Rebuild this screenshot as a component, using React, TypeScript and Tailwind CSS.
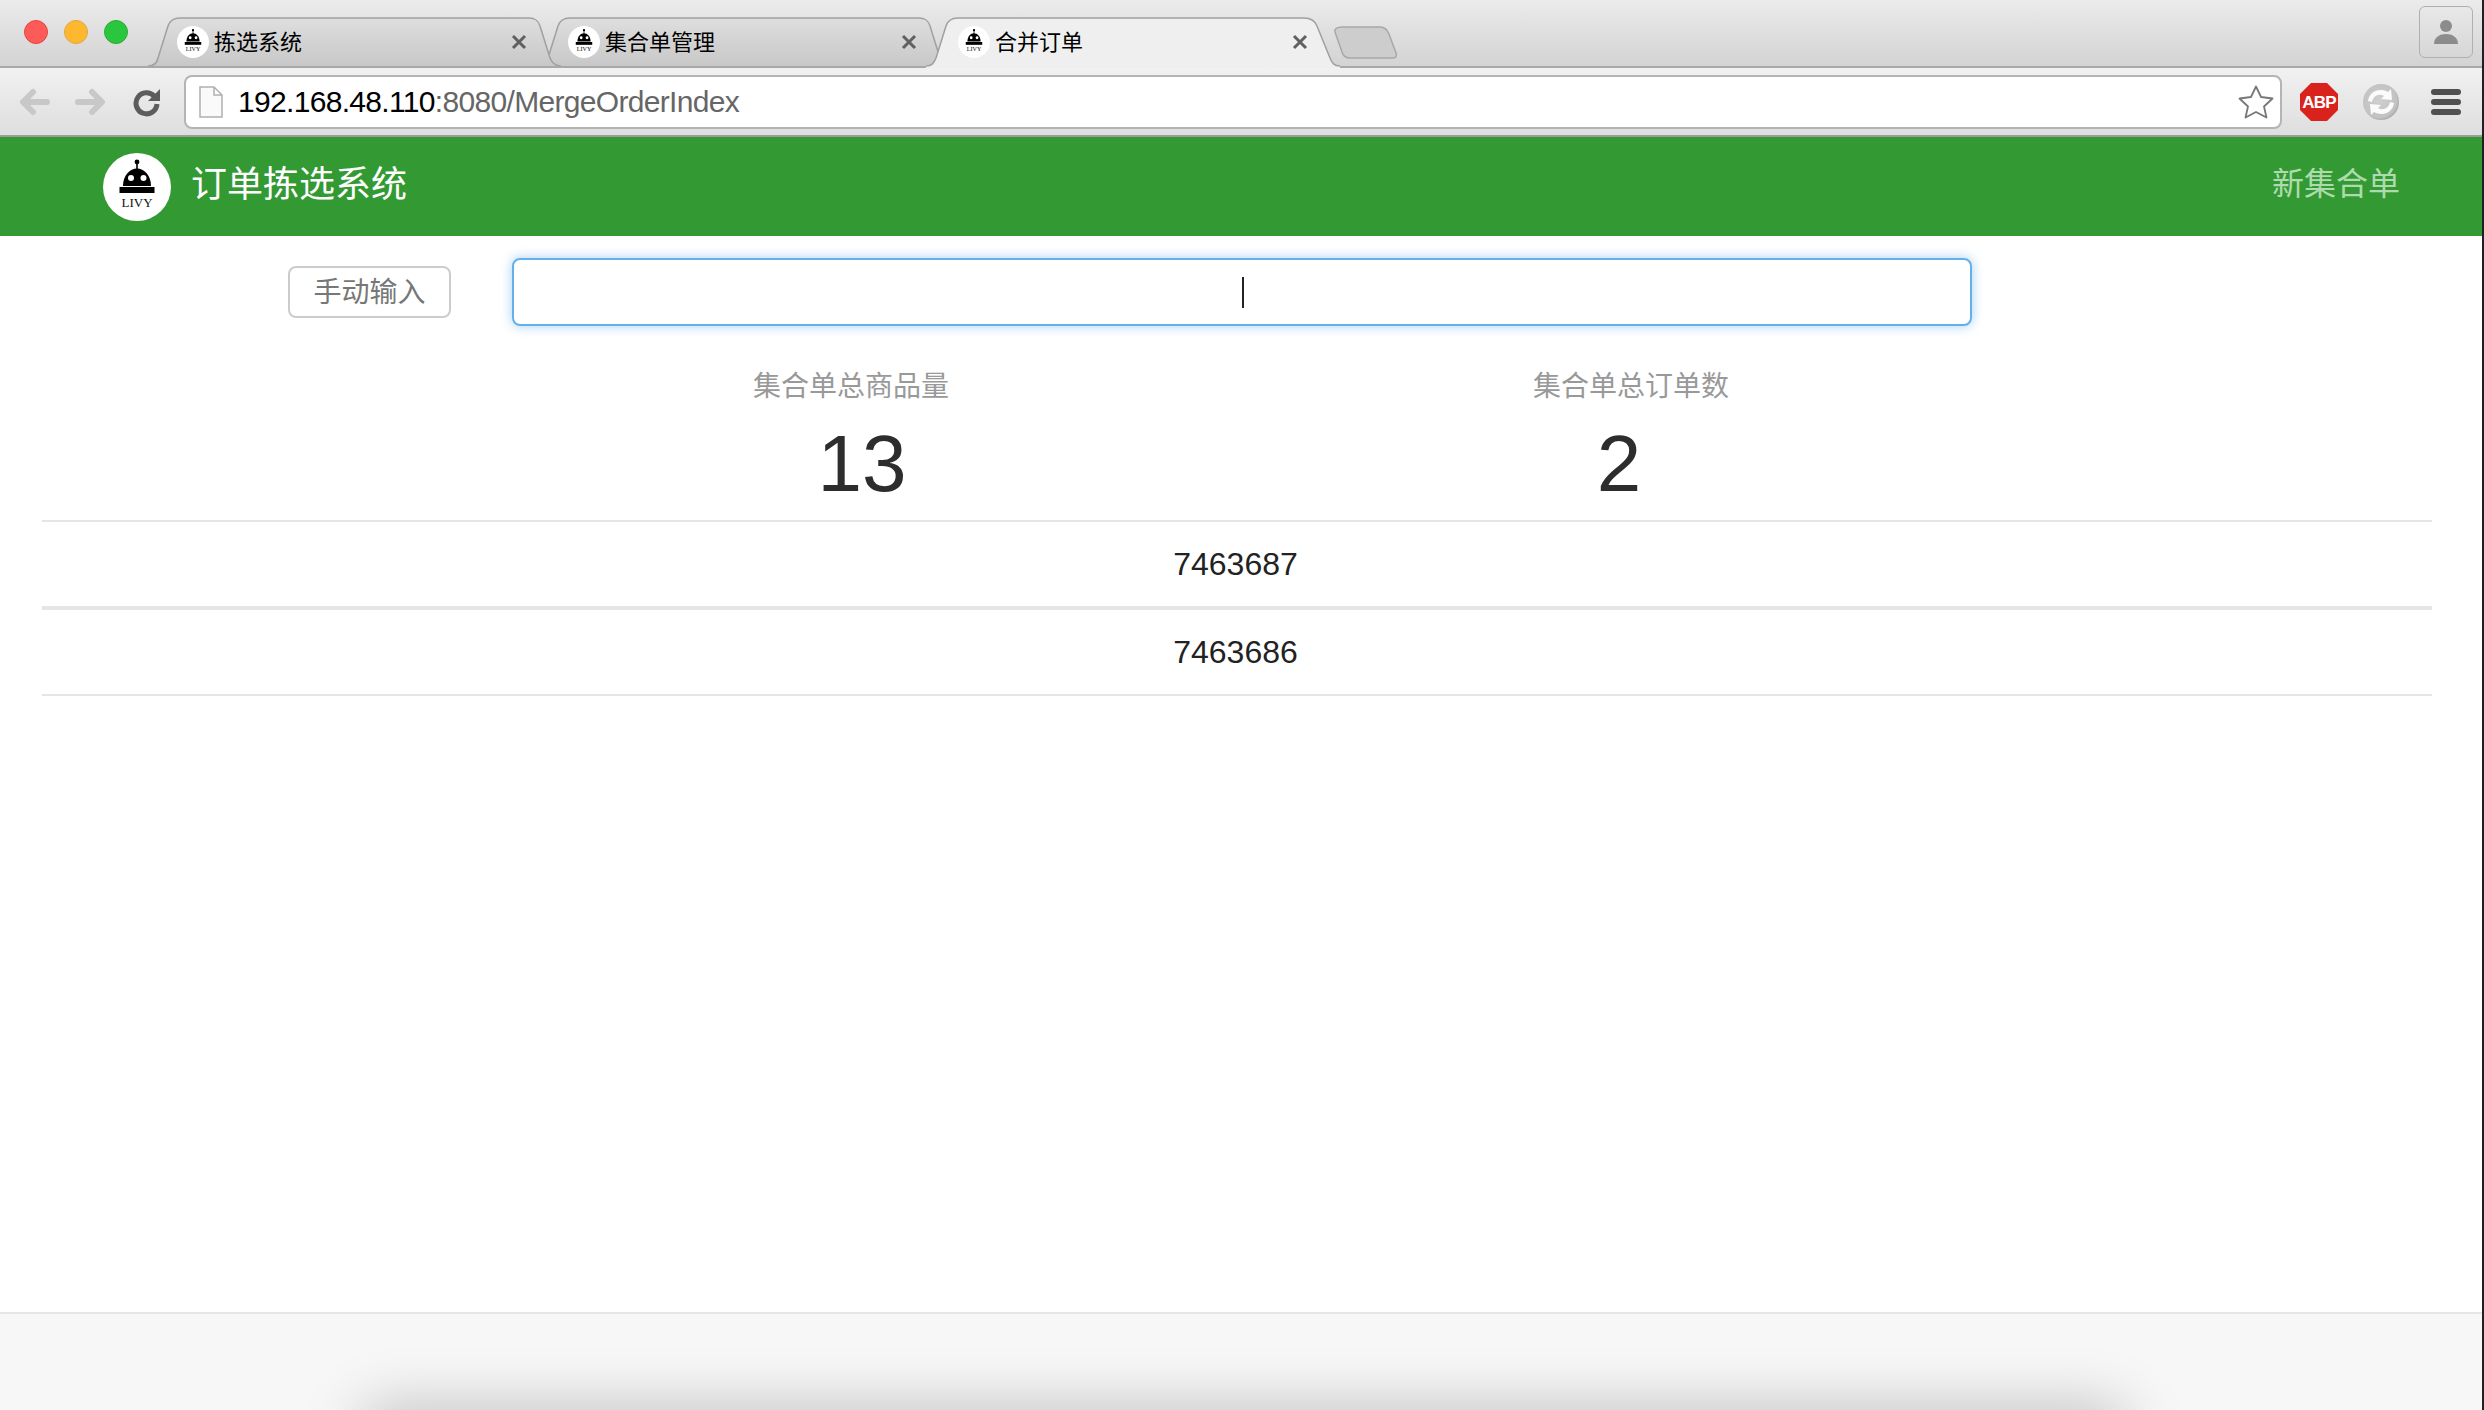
const sans = "font-['Liberation_Sans','Noto_Sans_CJK_SC',sans-serif]"

function LivyLogo({ size }: { size: number }) {
  return (
    <svg width={size} height={size} viewBox="0 0 68 68" className="shrink-0">
      <circle cx="34" cy="34" r="34" fill="#fff" />
      <circle cx="34" cy="9" r="2.4" fill="#000" />
      <rect x="33.2" y="9" width="1.6" height="8" fill="#000" />
      <path d="M20 33 C20 22 27 15.5 34 15.5 C41 15.5 48 22 48 33 Z" fill="#000" />
      <circle cx="28" cy="25" r="3" fill="#fff" />
      <circle cx="40.5" cy="25" r="3" fill="#fff" />
      <rect x="16.5" y="34" width="35" height="6" fill="#000" />
      <text x="34" y="54" textAnchor="middle" fontSize="13" fill="#111" fontFamily="Liberation Serif, serif">LIVY</text>
    </svg>
  )
}

function TabShape({ active }: { active?: boolean }) {
  if (active) {
    const edge = "M0 49 C6 49 8 46 10 41 L20 9 C22 3 26 1 32 1 L378 1 C385 1 389 4 391 9 L404 41 C406 46 408 49 414 49"
    return (
      <svg width={414} height={51} className="absolute left-0 top-0">
        <path d={`${edge} L414 51 L0 51 Z`} fill="#efefef" />
        <path d={edge} fill="none" stroke="#a0a0a0" strokeWidth="1.5" />
      </svg>
    )
  }
  return (
    <svg width={413} height={49} className="absolute left-0 top-0">
      <defs>
        <linearGradient id="tabIdle" x1="0" y1="0" x2="0" y2="1">
          <stop offset="0" stopColor="#dedede" />
          <stop offset="1" stopColor="#c8c8c8" />
        </linearGradient>
      </defs>
      <path d="M0 49 C6 49 9 46 10 41 L20 9 C22 3 26 1 32 1 L381 1 C387 1 390 3 392 9 L402 41 C404 46 407 49 413 49" fill="url(#tabIdle)" stroke="#a0a0a0" strokeWidth="1.5" />
    </svg>
  )
}

function CloseX() {
  return (
    <svg width="16" height="16" viewBox="0 0 16 16" className="shrink-0">
      <path d="M2 2 L14 14 M14 2 L2 14" stroke="#606060" strokeWidth="3" />
    </svg>
  )
}

function Tab({ title, active, z, className, iconPad, closePad }: { title: string; active?: boolean; z: string; className?: string; iconPad: string; closePad: string }) {
  return (
    <div className={`relative flex shrink-0 ${active ? "h-[51px] w-[414px]" : "h-[49px] w-[413px]"} ${z} ${className ?? ""}`}>
      <TabShape active={active} />
      <div className={`relative mt-[9px] flex h-[32px] w-full items-center ${iconPad} ${closePad}`}>
        <LivyLogo size={32} />
        <span className="ml-[5px] pt-[1px] text-[22px] leading-[32px] text-black">{title}</span>
        <span className="ml-auto"><CloseX /></span>
      </div>
    </div>
  )
}

function Toolbar() {
  return (
    <div className="flex h-[71px] items-center border-t-2 border-b-2 border-t-[#a8a8a8] border-b-[#9c9c9c] bg-gradient-to-b from-[#f1f1f1] to-[#dedede]">
      <svg width="32" height="28" viewBox="0 0 32 28" className="ml-[19px] shrink-0">
        <path d="M14 4 L4 14 L14 24 M5 14 L28 14" fill="none" stroke="#c8c8c8" strokeWidth="6" strokeLinecap="round" strokeLinejoin="round" />
      </svg>
      <svg width="32" height="28" viewBox="0 0 32 28" className="ml-[23px] shrink-0">
        <path d="M18 4 L28 14 L18 24 M27 14 L4 14" fill="none" stroke="#c8c8c8" strokeWidth="6" strokeLinecap="round" strokeLinejoin="round" />
      </svg>
      <svg width="30" height="30" viewBox="0 0 30 30" className="ml-[26px] shrink-0">
        <path d="M22.5 9.5 A10.5 10.5 0 1 0 25 17" fill="none" stroke="#5c5c5c" strokeWidth="5" />
        <path d="M28 2 L28 14 L16 14 Z" fill="#5c5c5c" />
      </svg>
      <div className={`ml-[22px] flex h-[54px] w-[2098px] shrink-0 items-center rounded-[8px] border-2 border-[#b4b4b4] bg-white ${sans}`}>
        <svg width="24" height="32" viewBox="0 0 24 32" className="ml-[13px] shrink-0">
          <path d="M1 1 H15 L23 9 V31 H1 Z M15 1 V9 H23" fill="#fafafa" stroke="#b0b0b0" strokeWidth="1.5" />
        </svg>
        <span className="ml-[15px] text-[30px] tracking-[-0.68px] text-black">
          192.168.48.110<span className="text-[#666]">:8080/MergeOrderIndex</span>
        </span>
        <svg width="38" height="36" viewBox="0 0 38 36" className="ml-auto mr-[5px] shrink-0">
          <path d="M19 2.5 L24 13 L35.5 14.5 L27 22.5 L29.5 33.5 L19 28 L8.5 33.5 L11 22.5 L2.5 14.5 L14 13 Z" fill="#fff" stroke="#777" strokeWidth="1.8" strokeLinejoin="round" />
        </svg>
      </div>
      <svg width="40" height="40" viewBox="0 0 40 40" className="ml-[17px] shrink-0">
        <path d="M12 1 H28 L39 12 V28 L28 39 H12 L1 28 V12 Z" fill="#d9221b" />
        <text x="20" y="26" textAnchor="middle" fontSize="17" fontWeight="700" letterSpacing="-0.8" fill="#fff" fontFamily="Liberation Sans, sans-serif">ABP</text>
      </svg>
      <svg width="38" height="38" viewBox="0 0 38 38" className="ml-[23px] shrink-0">
        <defs>
          <radialGradient id="syncBall" cx="0.45" cy="0.45" r="0.6">
            <stop offset="0" stopColor="#cfcfcf" />
            <stop offset="0.8" stopColor="#c2c2c2" />
            <stop offset="1" stopColor="#a0a0a0" />
          </radialGradient>
        </defs>
        <circle cx="19" cy="19" r="18" fill="url(#syncBall)" />
        <path d="M6 18 C7 9 17 4 26 9 L29 6 L30 17 L19 16 L22 13 C17 10 11 13 10 19 Z" fill="#fbfbfb" />
        <path d="M32 20 C31 29 21 34 12 29 L9 32 L8 21 L19 22 L16 25 C21 28 27 25 28 19 Z" fill="#fbfbfb" />
      </svg>
      <div className="ml-[31px] flex w-[30px] shrink-0 flex-col gap-[4px]">
        <div className="h-[6px] rounded-full bg-[#505050]" />
        <div className="h-[6px] rounded-full bg-[#505050]" />
        <div className="h-[6px] rounded-full bg-[#505050]" />
      </div>
    </div>
  )
}

function TabStrip() {
  return (
    <div className={`relative z-10 flex h-[66px] items-start bg-gradient-to-b from-[#ebebeb] to-[#d3d3d3] ${sans}`}>
      <div className="ml-[24px] mt-[20px] flex gap-[16px]">
        <div className="h-[24px] w-[24px] rounded-full border border-[#e2463f] bg-[#fc5b57]" />
        <div className="h-[24px] w-[24px] rounded-full border border-[#e1a73e] bg-[#feb82f]" />
        <div className="h-[24px] w-[24px] rounded-full border border-[#2dac2f] bg-[#2ac73e]" />
      </div>
      <div className="ml-[20px] mt-[17px] flex items-start">
        <Tab title="拣选系统" z="z-20" iconPad="pl-[29px]" closePad="pr-[34px]" />
        <Tab title="集合单管理" z="z-10" className="-ml-[23px]" iconPad="pl-[30px]" closePad="pr-[34px]" />
        <Tab title="合并订单" active z="z-30" className="-ml-[25px]" iconPad="pl-[32px]" closePad="pr-[32px]" />
        <svg width="64" height="33" viewBox="0 0 64 33" className="z-0 -ml-[6px] mt-[9px] shrink-0">
          <path d="M8 1 H46 C50 1 53 3 55 8 L62 27 C63 30 62 32 59 32 H16 C12 32 9 30 8 26 L1 6 C0 3 3 1 8 1 Z" fill="#cdcdcd" stroke="#a8a8a8" strokeWidth="1.5" />
        </svg>
      </div>
      <div className="ml-auto mr-[9px] mt-[6px] flex h-[52px] w-[54px] items-center justify-center rounded-[6px] border border-[#b0b0b0]">
        <svg width="26" height="26" viewBox="0 0 26 26">
          <circle cx="13" cy="7" r="6" fill="#8c8c8c" />
          <path d="M1 25 C1 18 7 15 13 15 C19 15 25 18 25 25 Z" fill="#8c8c8c" />
        </svg>
      </div>
    </div>
  )
}

export default function App() {
  const orders = ["7463687", "7463686"]
  return (
    <div className={`flex h-[1410px] w-[2484px] flex-col overflow-hidden border-r-2 border-[#211f26] bg-white ${sans}`}>
      <TabStrip />
      <Toolbar />

      {/* navbar */}
      <div className="flex h-[99px] shrink-0 items-center bg-[#339933] pl-[103px] pr-[82px]">
        <LivyLogo size={68} />
        <span className="ml-[20px] pb-[4px] text-[36px] text-white">订单拣选系统</span>
        <span className="ml-auto pb-[6px] text-[32px] text-[#addbad]">新集合单</span>
      </div>

      {/* page body */}
      <div className="flex-1">
        <div className="mt-[22px] flex items-center pl-[288px]">
          <button className="h-[52px] w-[163px] rounded-[8px] border-2 border-[#cccccc] bg-white pt-[2px] text-[28px] text-[#777]">手动输入</button>
          <div className="ml-[61px] flex h-[68px] w-[1460px] items-center justify-center rounded-[8px] border-2 border-[#66afe9] bg-white shadow-[0_0_12px_rgba(102,175,233,0.6)]">
            <div className="ml-[2px] h-[31px] w-[2px] bg-[#222]" />
          </div>
        </div>

        <div className="mt-[41px] flex pl-[461px]">
          <div className="flex w-[780px] flex-col items-center">
            <div className="text-[28px] leading-[40px] text-[#999]">集合单总商品量</div>
            <div className="mt-[12px] pl-[22px] text-[80px] leading-[90px] text-[#2d2d2d]">13</div>
          </div>
          <div className="flex w-[780px] flex-col items-center">
            <div className="text-[28px] leading-[40px] text-[#999]">集合单总订单数</div>
            <div className="mt-[12px] pr-[24px] text-[80px] leading-[90px] text-[#2d2d2d]">2</div>
          </div>
        </div>

        <div className="ml-[42px] mt-[11px] w-[2390px] border-b-2 border-[#e5e5e5]">
          {orders.map((o, i) => (
            <div key={o} className={`flex items-center justify-center border-[#e5e5e5] pr-[3px] ${i === 0 ? "h-[86px] border-t-2" : "h-[88px] border-t-4"} text-[32px] text-[#222]`}>
              {o}
            </div>
          ))}
        </div>
      </div>

      {/* footer */}
      <div className="relative h-[98px] shrink-0 overflow-hidden border-t-2 border-[#e6e6e6] bg-[#f7f7f7]">
        <div className="absolute left-[364px] top-full h-[40px] w-[1760px] shadow-[0_0_60px_rgba(0,0,0,0.28)]" />
      </div>
    </div>
  )
}
